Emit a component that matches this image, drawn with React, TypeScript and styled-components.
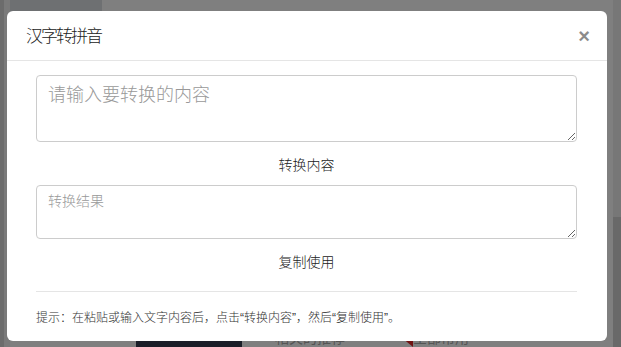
import React from "react";
import styled, { createGlobalStyle } from "styled-components";

const GlobalStyle = createGlobalStyle`
  html, body {
    margin: 0;
    padding: 0;
    overflow: hidden;
  }
  body {
    font-family: "Liberation Sans", "Noto Sans CJK SC", sans-serif;
    color: #333;
  }
  * {
    box-sizing: border-box;
  }
`;

/* page that sits behind the dialog */
const Page = styled.div`
  width: 621px;
  height: 347px;
  display: grid;
  grid-template-columns: 4px 6px 1fr 8px;
  background: #fff;
`;

const LeftRail = styled.div`
  background: #d8d8d8;
`;

const LeftGutter = styled.div`
  background: #f4f4f4;
`;

const Main = styled.div`
  display: flex;
  flex-direction: column;
  justify-content: space-between;
`;

const TopTab = styled.div`
  width: 92px;
  height: 40px;
  background: #dce0e4;
`;

const BottomRow = styled.div`
  display: flex;
  align-items: flex-start;
  height: 20px;
  padding-left: 126px;
`;

const DarkCard = styled.div`
  width: 106px;
  height: 20px;
  background: #343c50;
`;

const RowLabel = styled.span<{ $left: number }>`
  margin-left: ${(p) => p.$left}px;
  margin-top: 1px;
  font-size: 14px;
  line-height: 18px;
  color: #aaa;
  font-family: "Noto Sans CJK SC", sans-serif;
`;

const ScrollTrack = styled.div`
  background: #eee;
  display: flex;
  flex-direction: column;
  justify-content: flex-end;
`;

const ScrollThumb = styled.div`
  height: 130px;
  background: #d2d2d2;
`;

/* dialog */
const Backdrop = styled.div`
  position: fixed;
  inset: 0;
  background: rgba(0, 0, 0, 0.5);
  padding: 11px 0 0 7px;
`;

const Dialog = styled.div`
  width: 600px;
  background: #fff;
  border-radius: 6px;
  display: flex;
  flex-direction: column;
`;

const Header = styled.div`
  height: 50px;
  border-bottom: 1px solid #e5e5e5;
  display: flex;
  align-items: center;
  justify-content: space-between;
  padding: 0 17px 0 19px;
`;

const Title = styled.h4`
  margin: 0 0 2px;
  font-size: 17px;
  letter-spacing: -2px;
  font-weight: 300;
  line-height: 22px;
  color: #222;
  font-family: "Noto Sans CJK SC", sans-serif;
`;

const Close = styled.button`
  border: 0;
  background: none;
  padding: 0;
  font-family: "Liberation Sans", sans-serif;
  font-size: 20px;
  font-weight: bold;
  line-height: 20px;
  color: #000;
  opacity: 0.45;
  cursor: pointer;
`;

const Body = styled.div`
  padding: 14px 30px 14px 29px;
  display: flex;
  flex-direction: column;
`;

const TextBox = styled.textarea<{ $h: number; $size: number; $pt: number }>`
  display: block;
  width: 100%;
  height: ${(p) => p.$h}px;
  border: 1px solid #ccc;
  border-radius: 4px;
  padding: ${(p) => p.$pt}px 11px;
  font-family: "Noto Sans CJK SC", sans-serif;
  font-weight: 300;
  font-size: ${(p) => p.$size}px;
  line-height: 1.4;
  color: #555;
  background: #fff;
  outline: none;
  &::placeholder {
    color: #999;
  }
`;

const ActionButton = styled.button<{ $h: number }>`
  display: flex;
  align-items: center;
  justify-content: center;
  height: ${(p) => p.$h}px;
  border: 0;
  background: none;
  padding: 0;
  font-family: "Noto Sans CJK SC", sans-serif;
  font-weight: 300;
  font-size: 14px;
  color: #222;
  cursor: pointer;
`;

const Divider = styled.hr`
  margin: 8px 0 0;
  border: 0;
  border-top: 1px solid #e5e5e5;
`;

const Tip = styled.p`
  margin: 18px 0 0;
  font-family: "Liberation Sans", "Noto Sans CJK SC", sans-serif;
  font-weight: 300;
  font-size: 12px;
  line-height: 17px;
  color: #333;
`;

export default function App() {
  return (
    <>
      <GlobalStyle />
      <Page>
        <LeftRail />
        <LeftGutter />
        <Main>
          <TopTab />
          <BottomRow>
            <DarkCard />
            <RowLabel $left={33}>相关的推荐</RowLabel>
            <svg width="24" height="20" viewBox="0 0 24 20" style={{ marginLeft: 44 }}>
              <path d="M0 0 L8 0 L24 12 L24 20 Z" fill="#e02424" />
            </svg>
            <RowLabel $left={0}>全部常用</RowLabel>
          </BottomRow>
        </Main>
        <ScrollTrack>
          <ScrollThumb />
        </ScrollTrack>
      </Page>
      <Backdrop>
        <Dialog>
          <Header>
            <Title>汉字转拼音</Title>
            <Close aria-label="关闭">×</Close>
          </Header>
          <Body>
            <TextBox $h={67} $size={18} $pt={5} placeholder="请输入要转换的内容" />
            <ActionButton $h={43}>转换内容</ActionButton>
            <TextBox $h={54} $size={14} $pt={5} placeholder="转换结果" />
            <ActionButton $h={44}>复制使用</ActionButton>
            <Divider />
            <Tip>提示：在粘贴或输入文字内容后，点击“转换内容”，然后“复制使用”。</Tip>
          </Body>
        </Dialog>
      </Backdrop>
    </>
  );
}
